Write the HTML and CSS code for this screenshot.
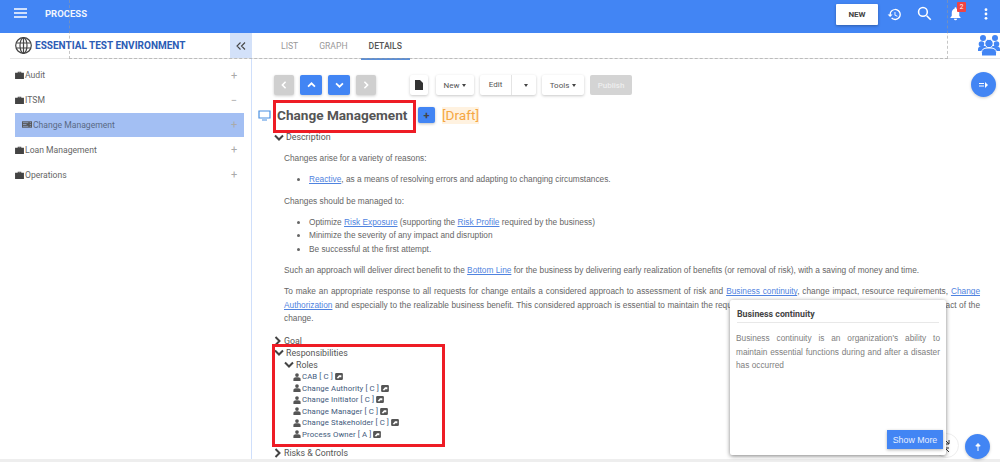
FILE: index.html
```html
<!DOCTYPE html>
<html lang="en">
<head>
<meta charset="utf-8">
<title>Process</title>
<link rel="stylesheet" href="styles.css">
</head>
<body>
<svg class="defs" width="0" height="0" aria-hidden="true">
  <symbol id="case" viewBox="0 0 10 9"><path d="M3 2V.8h4V2h3v7H0V2zM3.900 2h2.200V1.600H3.900z" fill="currentColor" fill-rule="evenodd"/></symbol>
  <symbol id="person" viewBox="0 0 10 10"><circle cx="5" cy="2.600" r="2.300" fill="currentColor"/><path d="M0.500 10V7.500C.5 6 2 5.500 3.500 5.200h3C8 5.500 9.500 6 9.500 7.500V10z" fill="currentColor"/></symbol>
  <symbol id="img" viewBox="0 0 10 9"><rect width="10" height="9" rx="1.500" fill="currentColor"/><path d="M2 6.500 5 3h3v2.500H5.500L4 7z" fill="#fff"/></symbol>
  <symbol id="chev-d" viewBox="0 0 10 7"><path d="M1 1.500 5 5.500 9 1.500" fill="none" stroke="currentColor" stroke-width="2"/></symbol>
  <symbol id="chev-r" viewBox="0 0 7 10"><path d="M1.500 1 5.500 5 1.500 9" fill="none" stroke="currentColor" stroke-width="2"/></symbol>
</svg>

<header class="topbar">
  <svg class="menu-icon" width="13" height="10" viewBox="0 0 13 10"><path d="M0 1h13M0 5h13M0 9h13" stroke="#fff" stroke-width="1.500"/></svg>
  <span class="page-name">PROCESS</span>
  <button class="new-btn">NEW</button>
  <svg class="top-icon history" width="15" height="15" viewBox="0 0 24 24"><path fill="#fff" d="M13 3a9 9 0 0 0-9 9H1l4 4 4-4H6a7 7 0 1 1 2.100 4.900l-1.400 1.400A9 9 0 1 0 13 3zm-1 5v5l4.300 2.500.7-1.200-3.500-2.100V8z"/></svg>
  <svg class="top-icon search" width="15" height="15" viewBox="0 0 24 24"><path fill="none" stroke="#fff" stroke-width="2.500" d="M15.500 15.500 22 22M16.500 9.500a7 7 0 1 1-14 0 7 7 0 0 1 14 0z"/></svg>
  <span class="bell-wrap">
    <svg width="15" height="16" viewBox="0 0 24 24"><path fill="#fff" d="M12 22a2.500 2.500 0 0 0 2.500-2.500h-5A2.500 2.500 0 0 0 12 22zm8-5-2-2v-5c0-3.200-1.700-5.800-4.500-6.500V2.500a1.500 1.500 0 0 0-3 0v1C7.700 4.200 6 6.800 6 10v5l-2 2v1.500h16z"/></svg>
    <span class="badge">2</span>
  </span>
  <svg class="top-icon more" width="4" height="12" viewBox="0 0 4 12"><circle cx="2" cy="1.700" r="1.400" fill="#fff"/><circle cx="2" cy="6" r="1.400" fill="#fff"/><circle cx="2" cy="10.300" r="1.400" fill="#fff"/></svg>
</header>

<div class="shell">
  <aside class="sidebar">
    <div class="env">
      <svg class="globe" width="17" height="17" viewBox="0 0 17 17"><g fill="none" stroke="#444" stroke-width="1.200"><circle cx="8.500" cy="8.500" r="7.800"/><ellipse cx="8.500" cy="8.500" rx="3.500" ry="7.800"/><path d="M8.500.7v15.600M1.200 6h14.600M1.200 11h14.600"/></g></svg>
      <span class="env-name">ESSENTIAL TEST ENVIRONMENT</span>
      <span class="collapse">
        <svg width="10" height="8" viewBox="0 0 10 8"><path d="M4.500.5 1 4l3.500 3.500M9 .5 5.500 4 9 7.500" fill="none" stroke="#444" stroke-width="1.100"/></svg>
      </span>
    </div>
    <ul class="tree">
      <li class="tree-item"><svg class="case" width="9" height="8"><use href="#case"/></svg><span class="tree-label">Audit</span><span class="tree-sign">+</span></li>
      <li class="tree-item"><svg class="case" width="9" height="8"><use href="#case"/></svg><span class="tree-label">ITSM</span><span class="tree-sign">−</span></li>
      <li class="tree-item selected"><svg class="proc" width="10" height="7" viewBox="0 0 11 7"><path d="M0 0h11v7H0z" fill="#555"/><path d="M1 1.500h6M1 3.500h4M1 5.500h6M8.500 1.500h1.500M8.500 3.500h1.500M8.500 5.500h1.500" stroke="#a4bff2" stroke-width=".7"/></svg><span class="tree-label">Change Management</span><span class="tree-sign">+</span></li>
      <li class="tree-item"><svg class="case" width="9" height="8"><use href="#case"/></svg><span class="tree-label">Loan Management</span><span class="tree-sign">+</span></li>
      <li class="tree-item"><svg class="case" width="9" height="8"><use href="#case"/></svg><span class="tree-label">Operations</span><span class="tree-sign">+</span></li>
    </ul>
  </aside>

  <main class="main">
    <nav class="tabs">
      <a class="tab">LIST</a>
      <a class="tab">GRAPH</a>
      <a class="tab active">DETAILS</a>
      <svg class="people" width="22" height="22" viewBox="0 0 22 22"><g fill="#4285f4"><circle cx="5" cy="4" r="3"/><circle cx="17" cy="4" r="3"/><circle cx="3.500" cy="10" r="2.800"/><circle cx="18.500" cy="10" r="2.800"/><path d="M0 15c0-2 2-3 4-3h14c2 0 4 1 4 3v2H0z"/><circle cx="11" cy="9.500" r="4.200" stroke="#fff" stroke-width="1"/><path d="M3.500 22v-3.500C3.500 15.500 6 14 9 14h4c3 0 5.500 1.500 5.500 4.500V22z" stroke="#fff" stroke-width="1"/></g></svg>
    </nav>

    <div class="toolbar">
      <div class="nav-btns">
        <button class="tbtn grey"><svg width="6" height="8"><use href="#chev-r" transform="matrix(-1 0 0 1 6 0)"/></svg></button>
        <button class="tbtn blue"><svg width="9" height="6"><use href="#chev-d" transform="matrix(1 0 0 -1 0 6)"/></svg></button>
        <button class="tbtn blue"><svg width="9" height="6"><use href="#chev-d"/></svg></button>
        <button class="tbtn grey"><svg width="6" height="8"><use href="#chev-r"/></svg></button>
      </div>
      <div class="action-btns">
        <button class="abtn file"><svg width="8" height="10" viewBox="0 0 8 10"><path d="M0 0h5l3 3v7H0z" fill="#333"/></svg></button>
        <button class="abtn w38">New <i class="caret"></i></button>
        <div class="abtn split"><span class="split-l">Edit</span><span class="split-r"><i class="caret"></i></span></div>
        <button class="abtn w42">Tools <i class="caret"></i></button>
        <button class="abtn publish">Publish</button>
      </div>
    </div>

    <div class="title-row">
      <svg class="monitor" width="13" height="11" viewBox="0 0 13 11"><path d="M1 1h11v7H1zM4 10h5" fill="none" stroke="#4a90e2" stroke-width="1.200"/></svg>
      <h1 class="title">Change Management</h1>
      <button class="plus">+</button>
      <span class="draft">[Draft]</span>
    </div>

    <section class="details">
      <div class="sec-head first"><svg class="chev" width="10" height="7"><use href="#chev-d"/></svg>Description</div>
      <div class="prose">
        <p>Changes arise for a variety of reasons:</p>
        <ul>
          <li><a>Reactive</a>, as a means of resolving errors and adapting to changing circumstances.</li>
        </ul>
        <p>Changes should be managed to:</p>
        <ul>
          <li>Optimize <a>Risk Exposure</a> (supporting the <a>Risk Profile</a> required by the business)</li>
          <li>Minimize the severity of any impact and disruption</li>
          <li>Be successful at the first attempt.</li>
        </ul>
        <p>Such an approach will deliver direct benefit to the <a>Bottom Line</a> for the business by delivering early realization of benefits (or removal of risk), with a saving of money and time.</p>
        <p class="just">To make an appropriate response to all requests for change entails a considered approach to assessment of risk and <a>Business continuity</a>, change impact, resource requirements, <a>Change Authorization</a> and especially to the realizable business benefit. This considered approach is essential to maintain the required balance between the cost, the benefit and the full impact of the change.</p>
      </div>
      <div class="sec-head goal"><svg class="chev-side" width="7" height="10"><use href="#chev-r"/></svg>Goal</div>
      <div class="sec-head tight"><svg class="chev" width="10" height="7"><use href="#chev-d"/></svg>Responsibilities</div>
      <div class="sec-head roles"><svg class="chev" width="10" height="7"><use href="#chev-d"/></svg>Roles</div>
      <ul class="role-list">
        <li><svg width="8" height="8"><use href="#person"/></svg><span>CAB [ C ]</span><svg class="ext" width="8" height="7"><use href="#img"/></svg></li>
        <li><svg width="8" height="8"><use href="#person"/></svg><span>Change Authority [ C ]</span><svg class="ext" width="8" height="7"><use href="#img"/></svg></li>
        <li><svg width="8" height="8"><use href="#person"/></svg><span>Change Initiator [ C ]</span><svg class="ext" width="8" height="7"><use href="#img"/></svg></li>
        <li><svg width="8" height="8"><use href="#person"/></svg><span>Change Manager [ C ]</span><svg class="ext" width="8" height="7"><use href="#img"/></svg></li>
        <li><svg width="8" height="8"><use href="#person"/></svg><span>Change Stakeholder [ C ]</span><svg class="ext" width="8" height="7"><use href="#img"/></svg></li>
        <li><svg width="8" height="8"><use href="#person"/></svg><span>Process Owner [ A ]</span><svg class="ext" width="8" height="7"><use href="#img"/></svg></li>
      </ul>
      <div class="sec-head risks"><svg class="chev-side" width="7" height="10"><use href="#chev-r"/></svg>Risks &amp; Controls</div>
    </section>
  </main>
</div>

<div class="footer-strip"></div>

<div class="dash-box"></div>
<div class="red-box title-box"></div>
<div class="red-box roles-box"></div>

<button class="fab fab-top"><svg width="10" height="6" viewBox="0 0 10 6"><path d="M0 1.500h5M0 4h5" stroke="#fff" stroke-width="1"/><path d="M6 0l3 3-3 3z" fill="#fff"/></svg></button>
<div class="expand-fab"><svg width="8" height="14" viewBox="0 0 8 14"><path d="M2 1l4 4M6 1v4H2M6 13 2 9m0 4V9h4" fill="none" stroke="#333" stroke-width="1"/></svg></div>
<button class="fab fab-bottom"><svg width="6" height="8" viewBox="0 0 6 8"><path d="M3 8V2M.8 3 3 .500 5.200 3z" stroke="#fff" fill="#fff" stroke-width="1"/></svg></button>

<aside class="popover">
  <h2 class="pop-title">Business continuity</h2>
  <p class="pop-text">Business continuity is an organization's ability to maintain essential functions during and after a disaster has occurred</p>
  <button class="show-more">Show More</button>
</aside>
</body>
</html>
```

FILE: styles.css
```css
* { box-sizing: border-box; }
html, body { margin: 0; padding: 0; }
body {
  width: 1000px;
  height: 462px;
  overflow: hidden;
  position: relative;
  background: #fff;
  font-family: Roboto, "Liberation Sans", sans-serif;
  color: #555;
}
.defs { position: absolute; }
button { font-family: inherit; cursor: pointer; }
ul { list-style: none; margin: 0; padding: 0; }

.topbar {
  height: 33px;
  background: #4285f4;
  display: flex;
  align-items: center;
  padding: 0 12px 4px 14px;
  color: #fff;
}
.menu-icon { flex: none; margin-bottom: 3px; }
.page-name { margin: 0 0 3px 18px; font-size: 9.500px; font-weight: 700; flex: 1; opacity: .92; }
.new-btn {
  width: 42px; height: 21px; flex: none;
  background: #fff; border: 0; border-radius: 1px; padding: 0;
  font-size: 8px; font-weight: 700; color: #444;
  box-shadow: 0 1px 3px rgba(0,0,0,.3);
}
.top-icon { flex: none; }
.history { margin-left: 9px; margin-bottom: 1px; }
.search { margin-left: 15px; margin-bottom: 3px; }
.bell-wrap { position: relative; margin-left: 16px; margin-bottom: 1px; height: 16px; width: 15px; flex: none; }
.badge {
  position: absolute; left: 9px; top: -4px;
  width: 9px; height: 10px; background: #ef4444; border-radius: 1px;
  font-size: 6.500px; line-height: 10px; text-align: center; color: #fff;
}
.more { margin-left: 21px; margin-bottom: 2px; }

.shell { display: flex; height: 426px; }
.sidebar { width: 252px; flex: none; border-right: 1px solid #cfdffb; }
.env {
  height: 26px; margin-left: 10px; display: flex; align-items: center;
  padding-left: 5px; border-bottom: 1px solid #e6e6e6;
}
.globe { flex: none; }
.env-name { margin-left: 3px; font-size: 10px; font-weight: 700; color: #2b5cb5; flex: 1; white-space: nowrap; }
.collapse {
  width: 22px; height: 25px; margin-right: -1px; background: #d3e1f9;
  display: flex; align-items: center; justify-content: center; flex: none;
}
.tree { padding: 4px 0 0 15px; width: 244px; }
.tree-item {
  height: 24.800px; display: flex; align-items: center; font-size: 8.600px; color: #666;
  padding-right: 5px;
}
.tree-item.selected { background: #a3bff3; color: #5a6a85; }
.case { color: #444; flex: none; }
.proc { flex: none; margin-left: 7px; }
.tree-label { margin-left: 1px; flex: 1; }
.tree-sign { font-size: 11px; color: #aaa; width: 10px; text-align: center; }

.main { flex: 1; min-width: 0; position: relative; }
.tabs {
  height: 26px; display: flex; align-items: stretch; padding-left: 21px;
  border-bottom: 1px solid #e6e6e6; position: relative;
}
.tab { font-size: 8.600px; color: #999; line-height: 26px; padding: 0 8px; margin-right: 5px; white-space: nowrap; }
.tab.active { color: #555; font-weight: 500; border-bottom: 2px solid #5b8fd8; height: 27px; }
.people { position: absolute; right: 0; top: 1px; }

.toolbar { display: flex; align-items: center; height: 20px; margin: 16px 0 0 22px; }
.nav-btns { display: flex; gap: 6px; width: 136px; flex: none; }
.tbtn {
  width: 22px; height: 20px; border: 0; border-radius: 2px; color: #fff; padding: 0;
  display: flex; align-items: center; justify-content: center;
  box-shadow: 0 1px 3px rgba(0,0,0,.2);
}
.tbtn svg { overflow: visible; }
.tbtn.grey { background: #cfcfcf; width: 20px; }
.tbtn.blue { background: #4285f4; }
.action-btns { display: flex; gap: 6px; }
.abtn {
  height: 20px; background: #fff; border: 0; border-radius: 2px; font-size: 8px; color: #555; padding: 0;
  display: flex; align-items: center; justify-content: center; gap: 3px;
  box-shadow: 0 1px 3px rgba(0,0,0,.22);
}
.file { width: 18px; margin-right: 2px; }
.w38 { width: 38px; }
.w42 { width: 42px; }
.split { width: 56px; justify-content: flex-start; }
.split-l { width: 32px; text-align: center; line-height: 20px; border-right: 1px solid #e4e4e4; }
.split-r { flex: 1; display: flex; justify-content: center; }
.publish { width: 42px; background: #d4d4d4; color: #eee; font-weight: 500; box-shadow: none; }
.caret { display: inline-block; border: 2.500px solid transparent; border-top: 3px solid #444; border-bottom: 0; }

.title-row { display: flex; align-items: center; height: 24px; margin: 8px 0 0 6px; }
.monitor { flex: none; }
.title { margin: 0 0 1px 6px; width: 131px; font-size: 13.600px; font-weight: 700; color: #555; white-space: nowrap; }
.plus {
  margin-left: 10px; width: 17px; height: 16px; padding: 0; border: 0; border-radius: 2px;
  background: #4285f4; color: #444; font-size: 11px; font-weight: 700; line-height: 15px;
  box-shadow: 0 1px 3px rgba(0,0,0,.25);
}
.draft { margin-left: 7px; background: #fff2e0; color: #f5a742; font-size: 13.600px; line-height: 17px; }

.details { margin-left: 22px; padding-right: 20px; }
.sec-head {
  font-size: 8.800px; color: #555; line-height: 12px; display: flex; align-items: center; white-space: nowrap;
}
.sec-head.first { margin-top: 4px; }
.chev { color: #444; margin-right: 2px; flex: none; }
.chev-side { color: #444; margin-right: 3px; flex: none; }

.prose { margin: 9px 0 0 10px; font-family: "Liberation Sans", Arial, sans-serif; font-size: 8.300px; line-height: 13.500px; color: #666; }
.prose p { margin: 0 0 7.800px; }
.prose ul { margin: 0 0 7.800px; padding-left: 25px; list-style: disc; }
.prose a { color: #4f83e0; text-decoration: underline; }
.just { text-align: justify; }

.goal { margin-top: 9px; }
.roles { margin: 0 0 0 10px; }
.role-list { margin: 0 0 0 19px; }
.role-list li {
  height: 11.500px; display: flex; align-items: center; font-size: 7.800px; color: #3f5a7c; letter-spacing: .1px;
}
.role-list li > svg:first-child { color: #555; margin-right: 1px; flex: none; }
.ext { color: #555; margin-left: 2px; flex: none; }
.risks { margin-top: 7px; }

.footer-strip { height: 3px; background: #eee; }

.dash-box {
  position: absolute; left: 69px; top: 0; width: 879px; height: 59px;
  border-right: 1px dashed #999; border-bottom: 1px dashed #999; border-left: 1px dashed #999; opacity: .55;
  pointer-events: none;
}
.red-box { position: absolute; border: 3px solid #ee1c25; pointer-events: none; }
.title-box { left: 273px; top: 100px; width: 143px; height: 33px; }
.roles-box { left: 272px; top: 344px; width: 173px; height: 103px; }

.fab {
  position: absolute; width: 25px; height: 25px; border-radius: 50%; border: 0; background: #4285f4; padding: 0;
  display: flex; align-items: center; justify-content: center;
  box-shadow: 0 1px 3px rgba(0,0,0,.2);
}
.fab-top { left: 971px; top: 72px; }
.fab-bottom { left: 965px; top: 434px; }
.expand-fab {
  position: absolute; left: 934px; top: 433px; width: 25px; height: 25px; border-radius: 50%;
  border: 1px solid #eee; background: #fff; display: flex; align-items: center; justify-content: center;
}

.popover {
  position: absolute; left: 730px; top: 300px; width: 216px; height: 155px; background: #fff;
  border-radius: 2px; box-shadow: 0 1px 4px rgba(0,0,0,.5); padding: 0 6px;
}
.pop-title {
  margin: 0 1px; padding: 8px 0 2px; font-size: 8.800px; font-weight: 700; color: #444; line-height: 12px;
  border-bottom: 1px solid #e8e8e8;
}
.pop-text {
  margin: 9px 0 0 0; font-family: "Liberation Sans", Arial, sans-serif; font-size: 8.300px; line-height: 13.500px; color: #808080; text-align: justify;
}
.show-more {
  position: absolute; right: 3px; bottom: 6px; width: 56px; height: 19px; background: #4285f4; border: 0;
  color: #e8efff; font-family: "Liberation Sans", Arial, sans-serif; font-size: 8.800px; padding: 0;
  box-shadow: 0 1px 3px rgba(0,0,0,.3);
}
```
